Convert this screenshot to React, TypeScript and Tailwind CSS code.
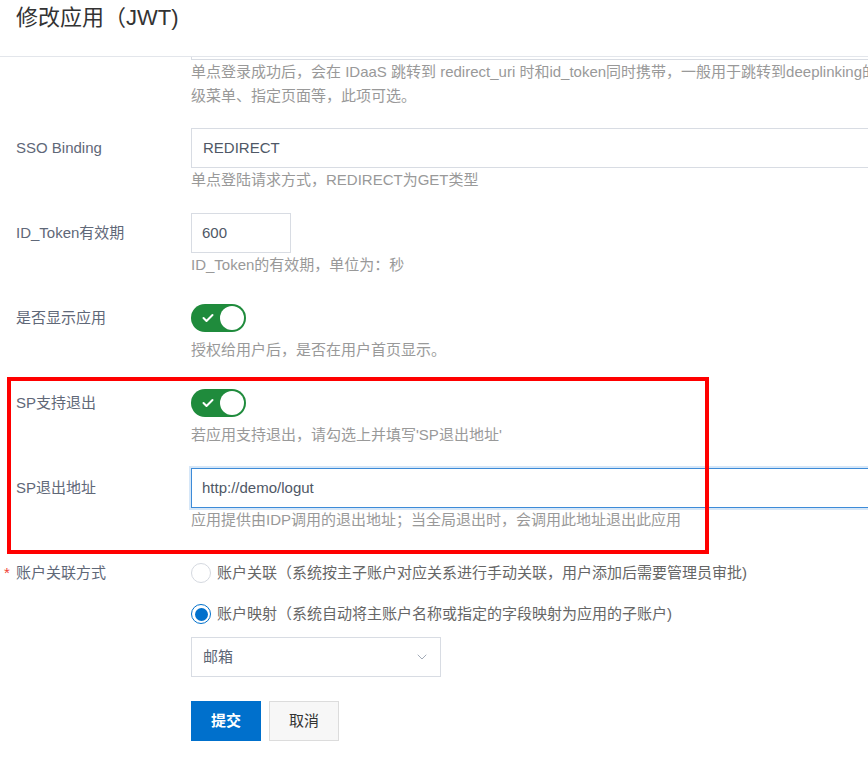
import { ChevronDown } from 'lucide-react'

const FONT = "font-['Liberation_Sans','Noto_Sans_CJK_SC',sans-serif]"

function Label({ text, required }: { text: string; required?: boolean }) {
  return (
    <div
      className={`w-[191px] shrink-0 text-[15px] leading-[40px] text-[#5f6878] ${
        required ? 'pl-[4px]' : 'pl-4'
      }`}
    >
      {required && <span className="inline-block w-[12px] text-[#f04134]">*</span>}
      {text}
    </div>
  )
}

function Help({ children }: { children: React.ReactNode }) {
  return <div className="text-[15px] leading-[24px] text-[#999] whitespace-nowrap">{children}</div>
}

function Toggle() {
  return (
    <div className="h-[40px] flex items-center">
      <div className="w-[55px] h-[28px] rounded-full bg-[#1f8b3c] flex items-center justify-between pl-[11px] pr-[2px]">
        <svg width="12" height="10" viewBox="0 0 12 10" fill="none">
          <polyline points="1.5,5 4.5,8 10.5,2" stroke="white" strokeWidth="2" strokeLinecap="round" strokeLinejoin="round" />
        </svg>
        <div className="w-[24px] h-[24px] rounded-full bg-white" />
      </div>
    </div>
  )
}

function Radio({ checked, text }: { checked?: boolean; text: string }) {
  return (
    <div className="h-[40px] flex items-center gap-[6px]">
      {checked ? (
        <div className="w-[20px] h-[20px] rounded-full border-[1.5px] border-[#0070cc] flex items-center justify-center">
          <div className="w-[13px] h-[13px] rounded-full bg-[#0070cc]" />
        </div>
      ) : (
        <div className="w-[20px] h-[20px] rounded-full border border-[#d5d9e0] bg-white" />
      )}
      <span className="text-[15px] text-[#666] whitespace-nowrap">{text}</span>
    </div>
  )
}

export default function App() {
  return (
    <div className={`relative w-[868px] h-[776px] overflow-hidden bg-white ${FONT}`}>
      {/* 标题 */}
      <div className="h-[57px] border-b border-[#e3e6eb]">
        <h1 className="pl-4 pt-[4px] text-[22px] leading-[28px] text-[#333]">修改应用（JWT)</h1>
      </div>

      {/* 被滚动遮住的 redirect 输入框 */}
      <div className="flex">
        <div className="w-[191px] shrink-0" />
        <div className="flex flex-col">
          <div className="w-[700px] h-[3px] border border-t-0 border-[#d8dce3]" />
          <div className="mb-[20px]">
            <Help>单点登录成功后，会在 IDaaS 跳转到 redirect_uri 时和id_token同时携带，一般用于跳转到deeplinking的二</Help>
            <Help>级菜单、指定页面等，此项可选。</Help>
          </div>
        </div>
      </div>

      <div className="flex mb-[21px]">
        <Label text="SSO Binding" />
        <div className="flex flex-col">
          <div className="w-[700px] h-[40px] border border-[#d8dce3] px-[11px] flex items-center text-[15px] text-[#4f5866]">
            REDIRECT
          </div>
          <Help>单点登陆请求方式，REDIRECT为GET类型</Help>
        </div>
      </div>

      <div className="flex mb-[21px]">
        <Label text="ID_Token有效期" />
        <div className="flex flex-col">
          <div className="w-[100px] h-[40px] border border-[#d8dce3] px-[10px] flex items-center text-[15px] text-[#4f5866]">
            600
          </div>
          <Help>ID_Token的有效期，单位为：秒</Help>
        </div>
      </div>

      <div className="flex mb-[21px]">
        <Label text="是否显示应用" />
        <div className="flex flex-col">
          <Toggle />
          <Help>授权给用户后，是否在用户首页显示。</Help>
        </div>
      </div>

      <div className="flex mb-[21px]">
        <Label text="SP支持退出" />
        <div className="flex flex-col">
          <Toggle />
          <Help>若应用支持退出，请勾选上并填写'SP退出地址'</Help>
        </div>
      </div>

      <div className="flex mb-[21px]">
        <Label text="SP退出地址" />
        <div className="flex flex-col">
          <div className="w-[700px] h-[40px] border border-[#3d8bd8] shadow-[0_0_0_2px_#d6e7f8] px-[10px] flex items-center text-[15px] text-[#4f5866]">
            http://demo/logut
          </div>
          <Help>应用提供由IDP调用的退出地址；当全局退出时，会调用此地址退出此应用</Help>
        </div>
      </div>

      <div className="flex">
        <Label text="账户关联方式" required />
        <div className="flex flex-col">
          <Radio text="账户关联（系统按主子账户对应关系进行手动关联，用户添加后需要管理员审批)" />
          <div className="mt-[1px]">
            <Radio checked text="账户映射（系统自动将主账户名称或指定的字段映射为应用的子账户)" />
          </div>
          <div className="mt-[3px] w-[250px] h-[40px] border border-[#d8dce3] pl-[11px] pr-[10px] flex items-center justify-between text-[15px] text-[#5c6675]">
            <span>邮箱</span>
            <ChevronDown className="w-[16px] h-[16px] text-[#a3abb8]" strokeWidth={1.5} />
          </div>
          <div className="mt-[24px] flex gap-[8px]">
            <button className="w-[70px] h-[40px] bg-[#0070cc] text-white text-[15px] font-bold">提交</button>
            <button className="w-[70px] h-[40px] bg-[#f7f7f7] border border-[#dcdcdc] text-[#333] text-[15px]">取消</button>
          </div>
        </div>
      </div>

      {/* 标注红框 */}
      <div className="absolute left-[7px] top-[377px] w-[702px] h-[177px] border-4 border-[#ff0000] pointer-events-none" />
    </div>
  )
}
